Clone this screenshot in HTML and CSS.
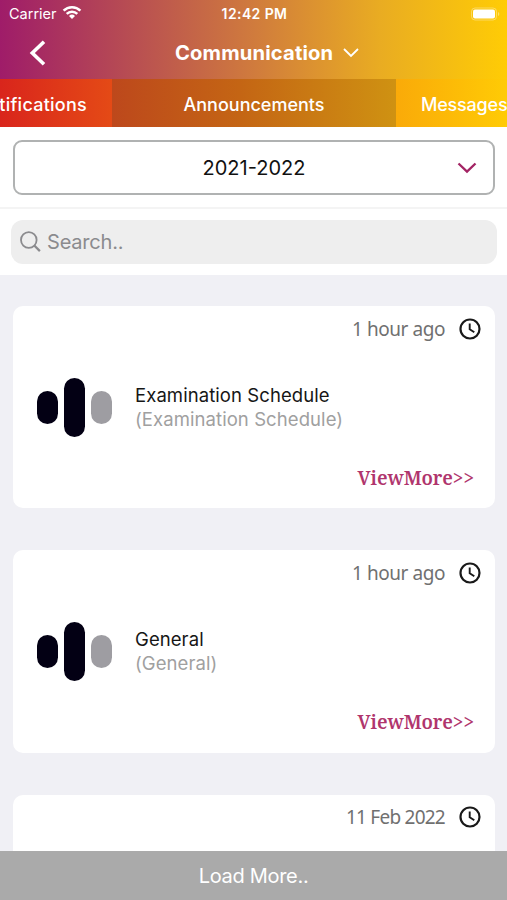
FILE: index.html
```html
<!DOCTYPE html>
<html lang="en">
<head>
<meta charset="utf-8">
<title>Communication</title>
<link rel="stylesheet" href="styles.css">
</head>
<body>
<div class="screen">
  <header class="header">
    <div class="status">
      <div class="carrier"><span>Carrier</span>
        <svg width="20" height="15" viewBox="0 0 20 15" fill="none" stroke="#fff" stroke-width="2.5"><path d="M1.600 5.600a12 12 0 0 1 16.800 0M4.700 8.800a7.600 7.600 0 0 1 10.600 0"/><path d="M10 14l-3-3a4.300 4.300 0 0 1 6 0z" fill="#fff" stroke="none"/></svg>
      </div>
      <span class="time">12:42 PM</span>
      <svg class="battery" width="30" height="14" viewBox="0 0 30 14"><rect x="1.500" y="1" width="25" height="12" rx="3.500" fill="none" stroke="#fff" stroke-opacity=".35"/><rect x="3" y="2.500" width="22" height="9" rx="2" fill="#fff"/><path d="M28 5v4q1.300-.6 1.300-2t-1.300-2z" fill="#fff" fill-opacity=".4"/></svg>
    </div>
    <div class="nav">
      <svg class="back" width="18" height="26" viewBox="0 0 18 26" fill="none" stroke="#fff" stroke-width="3.600"><path d="M16 1.800L4.300 13 16 24.200"/></svg>
      <h1 class="title">Communication</h1>
      <svg class="chevron" width="16" height="10" viewBox="0 0 16 10" fill="none" stroke="#fff" stroke-width="1.800"><path d="M1 1l7 7 7-7"/></svg>
    </div>
  </header>
  <nav class="tabs">
    <div class="tab tab-first"><span>Notifications</span></div>
    <div class="tab tab-active"><span>Announcements</span></div>
    <div class="tab tab-last"><span>Messages</span></div>
  </nav>
  <section class="year">
    <div class="select"><span>2021-2022</span>
      <svg width="20" height="12" viewBox="0 0 20 12" fill="none" stroke="#a32464" stroke-width="2.300"><path d="M1.500 1.500L10 9.700l8.500-8.200"/></svg>
    </div>
  </section>
  <section class="search">
    <div class="field">
      <svg width="22" height="22" viewBox="0 0 22 22" fill="none" stroke="#8b8b8e" stroke-width="1.800"><circle cx="8.800" cy="9" r="7.800"/><path d="M14.300 14.500l5.600 5.600" stroke-width="2.300"/></svg>
      <span>Search..</span>
    </div>
  </section>
  <main class="list">
    <article class="card">
      <div class="when"><span class="ago">1 hour ago</span><svg class="clock" width="22" height="22" viewBox="0 0 22 22"><circle cx="11" cy="11" r="9.500"/><path d="M10.700 5.500v5.800l4.600 3"/></svg></div>
      <div class="body">
        <div class="bars"><i class="bar"></i><i class="bar tall"></i><i class="bar pale"></i></div>
        <div class="text"><div class="name"><span>Examination Schedule</span></div><div class="sub"><span>(Examination Schedule)</span></div></div>
      </div>
      <div class="more"><span>ViewMore&gt;&gt;</span></div>
    </article>
    <article class="card">
      <div class="when"><span class="ago">1 hour ago</span><svg class="clock" width="22" height="22" viewBox="0 0 22 22"><circle cx="11" cy="11" r="9.500"/><path d="M10.700 5.500v5.800l4.600 3"/></svg></div>
      <div class="body">
        <div class="bars"><i class="bar"></i><i class="bar tall"></i><i class="bar pale"></i></div>
        <div class="text"><div class="name"><span>General</span></div><div class="sub"><span>(General)</span></div></div>
      </div>
      <div class="more"><span>ViewMore&gt;&gt;</span></div>
    </article>
    <article class="card">
      <div class="when"><span class="date">11 Feb 2022</span><svg class="clock" width="22" height="22" viewBox="0 0 22 22"><circle cx="11" cy="11" r="9.500"/><path d="M10.700 5.500v5.800l4.600 3"/></svg></div>
    </article>
  </main>
  <footer class="load"><span>Load More..</span></footer>
</div>
</body>
</html>
```
FILE: styles.css
```css
* { box-sizing: border-box; }
body { margin: 0; font-family: Inter, "Liberation Sans", sans-serif; }
svg { display: block; flex: none; }
.screen { width: 507px; height: 900px; overflow: hidden; display: flex; flex-direction: column; background: #f0f0f5; white-space: nowrap; }
.header { height: 79px; flex: none; color: #fff; background: linear-gradient(90deg, #9f1c69 0%, #b74c53 25%, #d07b3d 50%, #e9ac22 75%, #ffcc05 100%); }
.status { height: 27px; display: grid; grid-template-columns: 1fr auto 1fr; align-items: center; padding: 0 7px 0 9px; }
.carrier { display: flex; align-items: center; gap: 5px; font-size: 14.5px; letter-spacing: 0; }
.carrier svg { margin-top: -2px; }
.time { font-size: 14px; font-weight: 600; letter-spacing: .4px; }
.battery { justify-self: end; }
.nav { height: 51px; display: flex; align-items: center; padding-left: 28px; }
.back { margin-right: 129px; }
.title { margin: 0; font-size: 20.2px; font-weight: 650; letter-spacing: .15px; width: 158px; }
.chevron { margin-left: 10px; }
.tabs { height: 47.5px; flex: none; display: grid; grid-template-columns: 112px 284px 111px; color: #fff; font-size: 18px; font-weight: 500; background: linear-gradient(90deg, #d9251c 0%, #e44a16 22%, #f07c10 50%, #faaa09 78%, #ffcb05 100%); }
.tab { display: flex; align-items: center; padding-top: 3px; overflow: hidden; }
.tab-first { justify-content: flex-end; padding-right: 25px; letter-spacing: .25px; }
.tab-active { justify-content: center; background: linear-gradient(90deg, #bd481c, #c46514 45%, #cf9212); }
.tab-last { padding-left: 25px; letter-spacing: -.2px; }
.year { height: 82.5px; flex: none; background: #fff; border-bottom: 2px solid #f4f4f4; padding: 13.5px 12px 0 13px; }
.select { height: 55px; border: 2px solid #b0b2b2; border-radius: 9px; display: grid; grid-template-columns: 1fr auto 1fr; align-items: center; padding: 0 16px; font-size: 20px; color: #111; }
.select span { grid-column: 2; }
.select svg { justify-self: end; }
.search { height: 66px; flex: none; background: #fff; padding: 11px 10px 0 11px; }
.field { height: 44px; border-radius: 12px; background: #eee; display: flex; align-items: center; gap: 5px; padding-left: 9px; color: #8b8b8e; font-size: 20px; letter-spacing: -.2px; }
.list { flex: 1; min-height: 0; overflow: hidden; display: flex; flex-direction: column; gap: 42px; padding: 31px 12px 0 13px; }
.card { height: 202.300px; flex: none; background: #fff; border-radius: 10px; }
.when { height: 45px; display: flex; align-items: center; justify-content: flex-end; gap: 14px; padding-right: 14px; color: #707070; font-family: "Noto Sans", sans-serif; font-size: 19px; }
.ago { letter-spacing: -.45px; }
.date { letter-spacing: -.75px; }
.clock { fill: none; stroke: #191919; stroke-width: 2.200; }
.clock path { stroke-width: 1.900; }
.body { height: 113px; display: flex; align-items: center; padding-left: 24px; }
.bars { display: flex; align-items: center; gap: 6px; }
.bar { width: 21px; height: 33px; border-radius: 11px; background: #030014; }
.tall { height: 59px; }
.pale { background: #9e9da2; }
.text { margin-left: 23px; }
.name, .sub { height: 23.500px; line-height: 23.500px; font-size: 18.500px; color: #161616; letter-spacing: .08px; }
.sub { color: #a0a0a0; }
.more { height: 28px; display: flex; align-items: center; justify-content: flex-end; padding-right: 21px; color: #b0356d; font-family: "Noto Serif", "Liberation Serif", serif; font-weight: 600; font-size: 19px; letter-spacing: -.1px; }
.load { height: 49px; flex: none; background: #aaa; color: #fff; display: flex; align-items: center; justify-content: center; font-size: 20px; letter-spacing: -.3px; padding-top: 1px; }
```
